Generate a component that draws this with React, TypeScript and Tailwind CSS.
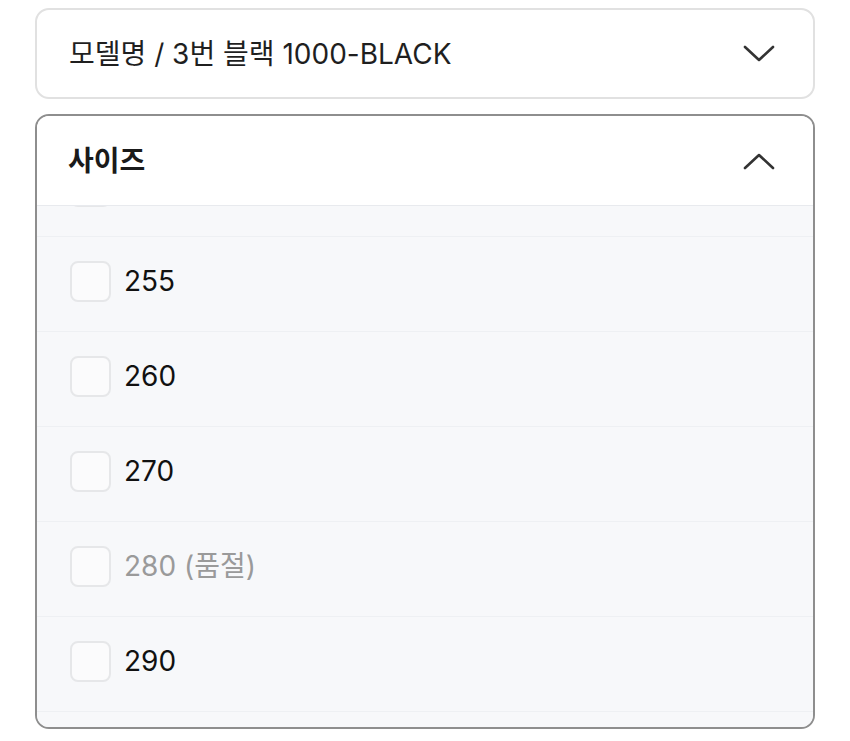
import { useEffect, useRef } from "react";

const sizes = [
  { label: "250", soldOut: false },
  { label: "255", soldOut: false },
  { label: "260", soldOut: false },
  { label: "270", soldOut: false },
  { label: "280", soldOut: true },
  { label: "290", soldOut: false },
  { label: "300", soldOut: false },
];

function Chevron({ up }: { up?: boolean }) {
  return (
    <svg width="34" height="20" viewBox="0 0 34 20" fill="none" className="shrink-0">
      <path
        d={up ? "M3 17 L17 4 L31 17" : "M3 3 L17 16 L31 3"}
        stroke="#333"
        strokeWidth="2.6"
        strokeLinecap="round"
        strokeLinejoin="round"
      />
    </svg>
  );
}

export default function App() {
  const listRef = useRef<HTMLDivElement>(null);

  useEffect(() => {
    if (listRef.current) listRef.current.scrollTop = 64;
  }, []);

  return (
    <div
      className="w-[850px] h-[741px] bg-white px-[35px] pt-2 flex flex-col gap-[15px]"
      style={{ fontFamily: 'Inter, "Noto Sans CJK KR", sans-serif' }}
    >
      <div className="h-[91px] rounded-[14px] border-2 border-[#e1e1e1] flex items-center justify-between pl-[32px] pr-[37px]">
        <span className="text-[28px] text-[#1f1f1f]">모델명 / 3번 블랙 1000-BLACK</span>
        <Chevron />
      </div>

      <div className="h-[615px] rounded-[14px] border-2 border-[#8e8e8e] overflow-hidden flex flex-col">
        <div className="h-[90px] shrink-0 flex items-center justify-between pl-[31px] pr-[37px] bg-white border-b border-[#e8eaee]">
          <span className="text-[28px] font-bold text-[#1a1a1a]">사이즈</span>
          <Chevron up />
        </div>
        <div
          ref={listRef}
          className="flex-1 overflow-y-auto bg-[#f7f8fa] [scrollbar-width:none]"
        >
          {sizes.map((s) => (
            <label
              key={s.label}
              className="h-[95px] flex items-center gap-[13px] pl-[33px] pb-[6px] border-b border-[#eef0f3]"
            >
              <span className="w-[41px] h-[41px] rounded-[8px] border-2 border-[#e6e7e9] bg-[#fbfbfc]" />
              <span
                className={
                  s.soldOut
                    ? "text-[28px] text-[#9a9a9a]"
                    : "text-[28px] text-[#111]"
                }
              >
                {s.soldOut ? `${s.label} (품절)` : s.label}
              </span>
            </label>
          ))}
        </div>
      </div>
    </div>
  );
}
